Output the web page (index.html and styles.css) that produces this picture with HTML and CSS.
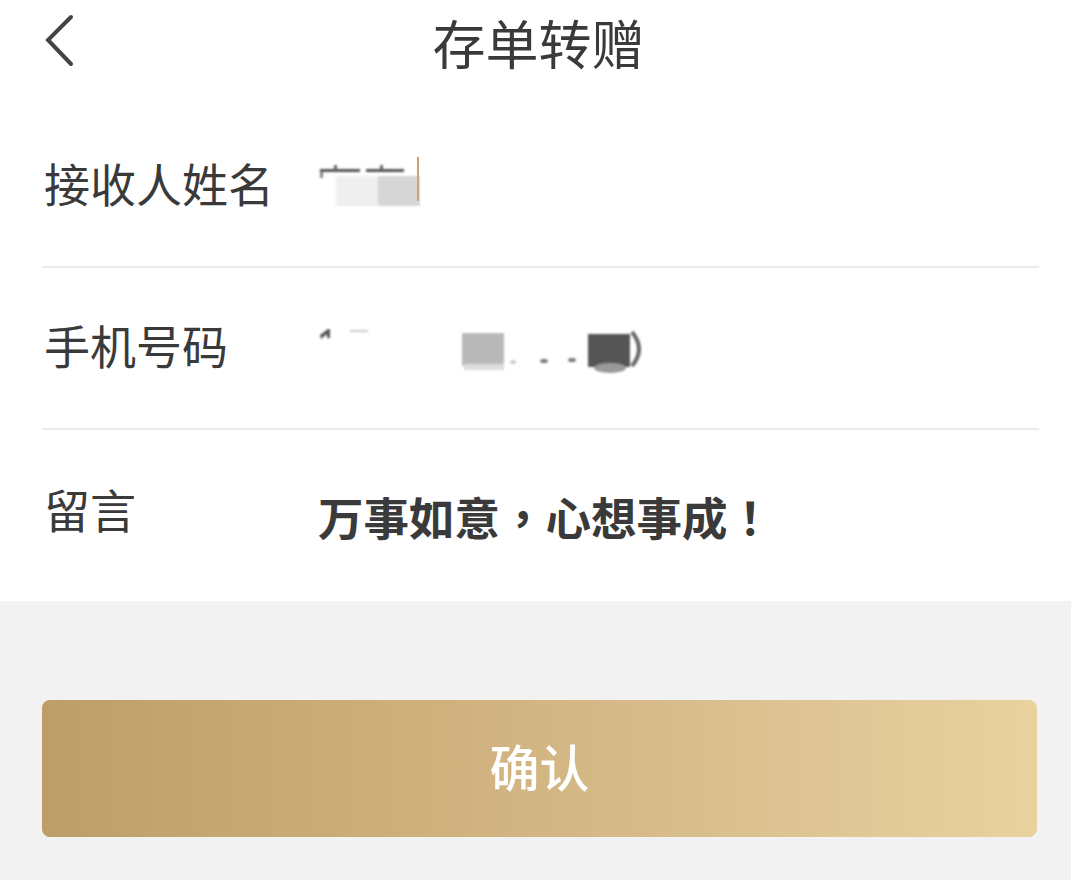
FILE: index.html
```html
<!DOCTYPE html>
<html lang="zh-CN">
<head>
<meta charset="utf-8">
<title>存单转赠</title>
<link rel="stylesheet" href="styles.css">
</head>
<body>
<div class="page">
  <div class="sheet">
    <header class="nav">
      <span class="back">
        <svg width="40" height="60" viewBox="0 0 40 60"><polyline points="32,5 9,28 32,52" fill="none" stroke="#444" stroke-width="4" stroke-linecap="round" stroke-linejoin="miter"/></svg>
      </span>
      <h1 class="title">存单转赠</h1>
    </header>
    <div class="form">
      <div class="row">
        <div class="label">接收人姓名</div>
        <div class="value">
          <svg class="mask" width="120" height="60" viewBox="0 0 120 60">
            <defs><filter id="b1"><feGaussianBlur stdDeviation="0.8"/></filter></defs>
            <g filter="url(#b1)">
              <rect x="18" y="20" width="42" height="30" fill="#efefef"/>
              <rect x="60" y="20" width="42" height="30" fill="#d6d6d6"/>
              <rect x="2" y="13" width="40" height="3" fill="#555"/>
              <rect x="16" y="9" width="3" height="5" fill="#666"/>
              <rect x="48" y="13" width="38" height="3" fill="#555"/>
              <rect x="62" y="9" width="3" height="5" fill="#666"/>
              <rect x="2" y="16" width="3" height="6" fill="#888"/>
            </g>
            <rect x="99" y="1" width="2" height="44" fill="#c9a46e"/>
          </svg>
        </div>
      </div>
      <div class="row">
        <div class="label">手机号码</div>
        <div class="value">
          <svg class="mask" width="340" height="60" viewBox="0 0 340 60">
            <defs><filter id="b2"><feGaussianBlur stdDeviation="1.2"/></filter></defs>
            <g filter="url(#b2)">
              <path d="M2 17 L10 11 L12 11 L12 20 L9 20 L9 16 L3 21 Z" fill="#555"/>
              <rect x="32" y="12" width="18" height="2" fill="#ccc"/>
              <rect x="144" y="15" width="42" height="33" fill="#b9b9b9"/>
              <rect x="146" y="46" width="40" height="6" fill="#ddd"/>
              <ellipse cx="195" cy="44" rx="3" ry="1.5" fill="#bbb"/>
              <ellipse cx="226" cy="43" rx="4" ry="2" fill="#777"/>
              <ellipse cx="254" cy="42" rx="4" ry="2" fill="#777"/>
              <rect x="270" y="16" width="42" height="33" fill="#545454"/>
              <ellipse cx="292" cy="50" rx="16" ry="5" fill="#999"/>
              <path d="M314 14 Q328 31 314 48" fill="none" stroke="#666" stroke-width="4"/>
            </g>
          </svg>
        </div>
      </div>
      <div class="row row-last">
        <div class="label label-up">留言</div>
        <div class="value value-text" lang="zh-TW">万事如意，心想事成！</div>
      </div>
    </div>
  </div>
  <div class="actions">
    <button class="confirm" type="button">确认</button>
  </div>
</div>
</body>
</html>
```
FILE: styles.css
```css
* { box-sizing: border-box; }
html, body { margin: 0; padding: 0; }
body {
  width: 1071px;
  height: 880px;
  overflow: hidden;
  background: #f2f2f2;
  font-family: "Noto Sans CJK SC", "Noto Sans", sans-serif;
  color: #333;
}
.page { display: flex; flex-direction: column; }
.sheet { background: #fff; }
.nav {
  height: 106px;
  display: flex;
  align-items: flex-start;
  justify-content: center;
  position: relative;
  padding-top: 7px;
}
.back {
  position: absolute;
  left: 39px;
  top: 12px;
  width: 40px;
  height: 60px;
}
.back svg { display: block; }
.title {
  margin: 0;
  font-size: 53px;
  font-weight: 400;
  line-height: 70px;
  color: #3a3a3a;
  letter-spacing: 0;
  padding-left: 6px;
}
.form { padding: 0 32px 0 42px; }
.row {
  height: 162px;
  display: flex;
  align-items: center;
  border-bottom: 2px solid #ebebeb;
}
.row-last { height: 171px; border-bottom: none; }
.label {
  width: 276px;
  flex: none;
  font-size: 46px;
  line-height: 60px;
  color: #3a3a3a;
  padding-left: 2px;
  margin-top: -9px;
}
.label-up { margin-top: -16px; }
.value { flex: 1; display: flex; align-items: center; }
.mask { display: block; }
.value-text {
  font-family: "Noto Sans CJK TC", "Noto Sans CJK SC", sans-serif;
  font-size: 45.5px;
  font-weight: 700;
  line-height: 60px;
  color: #3a3a3a;
}
.actions { padding: 99px 34px 0 42px; }
.confirm {
  width: 995px;
  height: 137px;
  border: none;
  border-radius: 8px;
  background: linear-gradient(90deg, #bd9d68 0%, #c9aa74 25%, #d4b886 55%, #e0c696 80%, #e9d29d 100%);
  color: #fff;
  font-family: "Noto Sans CJK SC", "Noto Sans", sans-serif;
  font-size: 50px;
  font-weight: 500;
  line-height: 60px;
  padding: 0 0 8px;
  display: block;
}
```
